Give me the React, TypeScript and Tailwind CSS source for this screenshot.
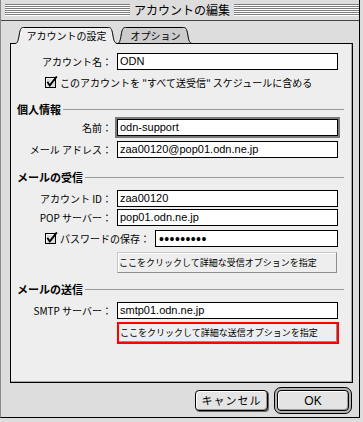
import React from "react";

const STRIPES =
  "flex-1 h-[12px] bg-[repeating-linear-gradient(to_bottom,#7c7c7c_0px,#7c7c7c_1px,#ffffff_1px,#ffffff_2px)]";

function Check() {
  return (
    <svg width="13" height="13" viewBox="0 0 13 13" className="shrink-0">
      <rect x="0.5" y="1.5" width="10" height="10" fill="#dcdcdc" stroke="#000" />
      <path d="M1.5,2.5 H9.5 M1.5,2.5 V10.5" stroke="#ffffff" />
      <path d="M2.3,5.8 L4.8,9.4 L11.8,0.4" fill="none" stroke="#000" strokeWidth="1.8" />
    </svg>
  );
}

function Field({ value, focused, width }: { value: string; focused?: boolean; width: string }) {
  return (
    <div
      className={`${width} h-[17px] bg-white border border-black flex items-center pl-[2px] text-[11px] leading-[13px] font-['Liberation_Sans',sans-serif] whitespace-nowrap overflow-hidden ${
        focused ? "shadow-[0_0_0_2px_#7a7a7a]" : ""
      }`}
    >
      {value}
    </div>
  );
}

function Row({ label, value, mt, focused }: { label: string; value: string; mt: string; focused?: boolean }) {
  return (
    <div className={`flex items-center ${mt}`}>
      <div className="w-[101px] text-right text-[10px] leading-[12px] whitespace-nowrap">{label}</div>
      <div className="ml-[5px]">
        <Field value={value} focused={focused} width="w-[221px]" />
      </div>
    </div>
  );
}

function Section({ title, mt }: { title: string; mt: string }) {
  return (
    <div className={`flex items-center h-[12px] pl-[6px] pr-[8px] ${mt}`}>
      <span className="text-[11px] leading-[12px] font-bold whitespace-nowrap">{title}</span>
      <div className="flex-1 ml-[2px] h-px bg-[#9a9a9a]" />
    </div>
  );
}

function ActiveTab() {
  return (
    <div className="relative z-10 w-[103px] h-[17px] flex items-center justify-center">
      <svg className="absolute inset-0" width="103" height="17" viewBox="0 0 103 17">
        <path
          d="M0,17 L0,16.5 C2.5,16.5 3,14 4,9 C5,3 5.5,0.5 8.5,0.5 L93.5,0.5 C96.5,0.5 97,3 98,9 C99,14 99.5,16.5 103,16.5 L103,17 Z"
          fill="#eeeeee"
        />
        <rect x="2" y="15" width="99" height="2" fill="#eeeeee" />
        <path
          d="M0,16.5 C2.5,16.5 3,14 4,9 C5,3 5.5,0.5 8.5,0.5 L93.5,0.5 C96.5,0.5 97,3 98,9 C99,14 99.5,16.5 103,16.5"
          fill="none"
          stroke="#000"
        />
        <path d="M6,8 C6.5,3.5 7,1.5 9,1.5" fill="none" stroke="#ffffff" />
      </svg>
      <span className="relative text-[10px] leading-[12px] whitespace-nowrap pt-[1px]">アカウントの設定</span>
    </div>
  );
}

function InactiveTab() {
  return (
    <div className="relative ml-[-1px] w-[76px] h-[17px] flex items-center justify-center">
      <svg className="absolute inset-0" width="76" height="17" viewBox="0 0 76 17">
        <path
          d="M0.5,16.5 C2.5,16.5 3,14 4,9 C5,3 5.5,0.5 8.5,0.5 L66.5,0.5 C69.5,0.5 70,3 71,9 C72,14 72.5,16.5 75.5,16.5 Z"
          fill="#cccccc"
          stroke="#000"
        />
      </svg>
      <span className="relative text-[10px] leading-[12px] whitespace-nowrap pt-[1px] pl-[1px]">オプション</span>
    </div>
  );
}

export default function App() {
  return (
    <div className="w-[363px] h-[422px] bg-[#dddddd] overflow-hidden font-['Noto_Sans_CJK_JP',sans-serif] text-black">
      <div className="w-[360px] h-[418px] border-l border-l-[#8a8a8a] border-r border-r-black border-b border-b-black bg-[#dddddd] flex flex-col">
        {/* title bar */}
        <div className="h-[21px] shrink-0 border-b border-b-[#444444] flex items-center gap-[4px] pl-[4px]">
          <div className={STRIPES} />
          <div className="text-[12px] leading-[14px] whitespace-nowrap">アカウントの編集</div>
          <div className={STRIPES} />
        </div>

        {/* body */}
        <div className="flex flex-col pl-[9px] pt-[6px]">
          <div className="flex pl-[5px] h-[17px]">
            <ActiveTab />
            <InactiveTab />
          </div>

          <div className="relative mt-[-1px] w-[343px] h-[340px] border border-black bg-[#eeeeee] shadow-[inset_-1px_-1px_0_#a8a8a8] flex flex-col">
            <Row label="アカウント名：" value="ODN" mt="mt-[9px]" />

            <div className="flex items-center h-[13px] mt-[6px] pl-[34px]">
              <Check />
              <span className="ml-[2px] text-[10px] leading-[12px] whitespace-nowrap">
                このアカウントを "すべて送受信" スケジュールに含める
              </span>
            </div>

            <Section title="個人情報" mt="mt-[14px]" />
            <Row label="名前：" value="odn-support" mt="mt-[4px]" focused />
            <Row label="メール アドレス：" value="zaa00120@pop01.odn.ne.jp" mt="mt-[5px]" />

            <Section title="メールの受信" mt="mt-[13px]" />
            <Row label="アカウント ID：" value="zaa00120" mt="mt-[7px]" />
            <Row label="POP サーバー：" value="pop01.odn.ne.jp" mt="mt-[2px]" />

            <div className="flex items-center h-[17px] mt-[4px] pl-[34px]">
              <Check />
              <span className="ml-[2px] text-[10px] leading-[12px] whitespace-nowrap">パスワードの保存：</span>
              <div className="ml-[5px] w-[183px] h-[17px] bg-white border border-black flex items-center pl-[3px] text-[14px] leading-[14px] tracking-[0.4px] font-['Liberation_Sans',sans-serif] overflow-hidden">
                •••••••••
              </div>
            </div>

            <div className="ml-[106px] mt-[5px] w-[220px] h-[21px] bg-[#eeeeee] border border-[#c6c6c6] border-r-[#8e8e8e] border-b-[#8e8e8e] shadow-[inset_1px_1px_0_#ffffff] flex items-center pl-[1px] text-[9px] leading-[11px] whitespace-nowrap">
              ここをクリックして詳細な受信オプションを指定
            </div>

            <Section title="メールの送信" mt="mt-[10px]" />
            <Row label="SMTP サーバー：" value="smtp01.odn.ne.jp" mt="mt-[7px]" />

            <div className="ml-[106px] mt-[3px] w-[222px] h-[22px] border-2 border-[#ff0000]">
              <div className="w-full h-full bg-[#eeeeee] border-r border-b border-r-[#8e8e8e] border-b-[#8e8e8e] flex items-center pl-[1px] text-[9px] leading-[11px] whitespace-nowrap">
                ここをクリックして詳細な送信オプションを指定
              </div>
            </div>
          </div>
        </div>

        {/* buttons */}
        <div className="mt-[4px] flex justify-end items-center gap-[6px] pr-[7px]">
          <div className="w-[73px] h-[21px] rounded-[4px] border border-black bg-[#e4e4e4] shadow-[inset_1px_1px_0_#ffffff,inset_-1px_-1px_0_#9a9a9a,1px_1px_0_#666666] flex items-center justify-center text-[11px] leading-[13px] tracking-[1px] whitespace-nowrap">
            キャンセル
          </div>
          <div className="w-[78px] h-[27px] rounded-[7px] border border-black bg-[#b4b4b4] p-[2px]">
            <div className="w-full h-full rounded-[4px] border border-black bg-[#e4e4e4] shadow-[inset_1px_1px_0_#ffffff,inset_-1px_-1px_0_#9a9a9a] flex items-center justify-center text-[12px] leading-[14px] font-['Liberation_Sans',sans-serif]">
              OK
            </div>
          </div>
        </div>
      </div>
    </div>
  );
}
